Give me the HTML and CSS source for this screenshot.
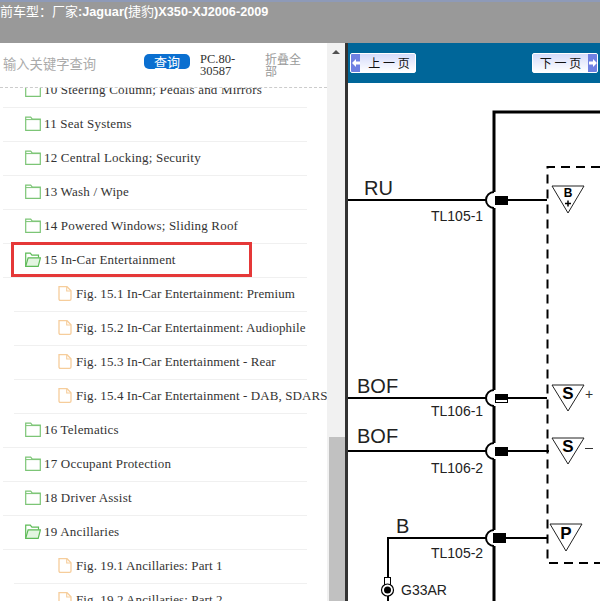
FILE: index.html
```html
<!DOCTYPE html>
<html lang="en">

<head>
    <meta charset="UTF-8">
    <meta name="viewport" content="width=device-width, initial-scale=1.0">
    <title>Document</title>
    <link rel="stylesheet" href="styles.css">
</head>

<body>
    <svg class="defs" width="0" height="0">
        <symbol id="folder" viewBox="0 0 16 15">
            <path d="M.7 14.300V1.200h5l1.600 2h8v11.100z" fill="none" stroke="#7cc576" stroke-width="1.200" />
            <path d="M.7 3.600h14.600" fill="none" stroke="#7cc576" stroke-width="1" />
        </symbol>
        <symbol id="folder-open" viewBox="0 0 16 15">
            <path d="M.7 14.300V1.200h4.600l1.600 2h6.600v2.600" fill="#fff" stroke="#5dbb57" stroke-width="1.200" />
            <path d="M.7 14.300l2.400-8.500h12.300l-2.200 8.500z" fill="#e3f5e1" stroke="#5dbb57" stroke-width="1.200" />
        </symbol>
        <symbol id="file" viewBox="0 0 14 15">
            <path d="M1 .7h8l4 4v8.200q0 1.400-1.400 1.400H2.400Q1 14.300 1 12.900z" fill="none" stroke="#f6cd9b" stroke-width="1.300" />
            <path d="M8.700.7v4.300h4.300" fill="none" stroke="#f6cd9b" stroke-width="1.100" />
        </symbol>
    </svg>

    <div class="top"><span class="cjk">当前车型：厂家</span>:Jaguar(<span class="cjk">捷豹</span>)X350-XJ2006-2009</div>

    <div class="page">
        <div class="side">
            <div class="side-left">
                <div class="search">
                    <span class="placeholder">输入关键字查询</span>
                    <span class="btn">查询</span>
                    <span class="code">PC.80-30587</span>
                    <span class="fold">折叠全部</span>
                </div>
                <div class="tree">
                    <div class="row"><svg class="ico"><use href="#folder" /></svg>10 Steering Column; Pedals and Mirrors</div>
                    <div class="row"><svg class="ico"><use href="#folder" /></svg>11 Seat Systems</div>
                    <div class="row"><svg class="ico"><use href="#folder" /></svg>12 Central Locking; Security</div>
                    <div class="row"><svg class="ico"><use href="#folder" /></svg>13 Wash / Wipe</div>
                    <div class="row"><svg class="ico"><use href="#folder" /></svg>14 Powered Windows; Sliding Roof</div>
                    <div class="row"><svg class="ico"><use href="#folder-open" /></svg>15 In-Car Entertainment<div class="mark"></div></div>
                    <div class="row sub"><svg class="ico-file"><use href="#file" /></svg>Fig. 15.1 In-Car Entertainment: Premium</div>
                    <div class="row sub"><svg class="ico-file"><use href="#file" /></svg>Fig. 15.2 In-Car Entertainment: Audiophile</div>
                    <div class="row sub"><svg class="ico-file"><use href="#file" /></svg>Fig. 15.3 In-Car Entertainment - Rear</div>
                    <div class="row sub"><svg class="ico-file"><use href="#file" /></svg>Fig. 15.4 In-Car Entertainment - DAB, SDARS</div>
                    <div class="row"><svg class="ico"><use href="#folder" /></svg>16 Telematics</div>
                    <div class="row"><svg class="ico"><use href="#folder" /></svg>17 Occupant Protection</div>
                    <div class="row"><svg class="ico"><use href="#folder" /></svg>18 Driver Assist</div>
                    <div class="row"><svg class="ico"><use href="#folder-open" /></svg>19 Ancillaries</div>
                    <div class="row sub"><svg class="ico-file"><use href="#file" /></svg>Fig. 19.1 Ancillaries: Part 1</div>
                    <div class="row sub"><svg class="ico-file"><use href="#file" /></svg>Fig. 19.2 Ancillaries: Part 2</div>
                </div>
            </div>
            <div class="scrollbar">
                <div class="arrow"></div>
                <div class="thumb"></div>
            </div>
        </div>

        <div class="main">
            <div class="nav">
                <div class="pager prev">
                    <span class="pager-arrow">
                        <svg width="8" height="10" viewBox="0 0 8 10"><path d="M0 5l4-4v2.500h4v3H4V9z" fill="#fff" /></svg>
                    </span>
                    <span class="pager-text">上 一 页</span>
                </div>
                <div class="pager">
                    <span class="pager-text">下 一 页</span>
                    <span class="pager-arrow">
                        <svg width="8" height="10" viewBox="0 0 8 10"><path d="M8 5L4 1v2.500H0v3h4V9z" fill="#fff" /></svg>
                    </span>
                </div>
            </div>

            <!-- viewBox uses page coordinates so the wiring can be read off the reference -->
            <svg class="diagram" viewBox="348 83 252 518">
                <path class="bus" d="M600 112H494V601" />
                <path class="dash" d="M600 167H547.500V563H600" />

                <g class="wire">
                    <path d="M348 200H487" />
                    <path d="M508 200H547" />
                    <path d="M348 398H487" />
                    <path d="M508 398H547" />
                    <path d="M348 451H487" />
                    <path d="M508 451H549" />
                    <path d="M486 538H388V601" />
                    <path d="M506 538H547" />
                </g>

                <rect class="gap" x="492" y="192" width="4" height="16" />
                <rect class="gap" x="492" y="390" width="4" height="16" />
                <rect class="gap" x="492" y="443" width="4" height="16" />
                <rect class="gap" x="490" y="530" width="6" height="16" />

                <g class="wire">
                    <path d="M494 192a8 8 0 0 0 0 16" />
                    <path d="M494 390a8 8 0 0 0 0 16" />
                    <path d="M494 443a8 8 0 0 0 0 16" />
                    <path d="M494 530a8 8 0 0 0 0 16" />
                </g>

                <rect x="495" y="196" width="13" height="9" />
                <rect x="495" y="394" width="13" height="6" />
                <rect class="thin" x="495.500" y="399.500" width="12" height="3" />
                <rect x="495" y="447" width="13" height="9" />
                <rect x="493" y="533" width="13" height="10" />

                <polygon class="tri" points="552,186 584,186 568,213" />
                <polygon class="tri" points="552,385 584,385 568,411" />
                <polygon class="tri" points="552,438 584,438 568,464" />
                <polygon class="tri" points="550,524 582,524 566,551" />

                <text class="label-lg" x="364" y="195">RU</text>
                <text class="label-lg" x="357" y="393">BOF</text>
                <text class="label-lg" x="357" y="443">BOF</text>
                <text class="label-lg" x="396" y="533">B</text>

                <text class="label" x="431" y="221">TL105-1</text>
                <text class="label" x="431" y="416">TL106-1</text>
                <text class="label" x="431" y="473">TL106-2</text>
                <text class="label" x="431" y="558">TL105-2</text>
                <text class="label" x="401" y="595">G33AR</text>

                <text class="tri-sm" x="568" y="197">B</text>
                <path class="sign" d="M565 203.500H571M568 200.500V206.500" />
                <text class="tri-lg" x="568" y="399">S</text>
                <text class="tri-lg" x="568" y="452">S</text>
                <text class="tri-lg" x="566" y="539">P</text>
                <text class="side-sign" x="585" y="399">+</text>
                <path class="minus" d="M585 448.500H593" />

                <rect class="pin" x="384.500" y="577.500" width="6" height="7" />
                <circle class="ring" cx="387.500" cy="590" r="6" />
                <circle cx="387.500" cy="590" r="3.500" />
            </svg>
        </div>
    </div>
</body>

</html>
```

FILE: styles.css
```css
html,
body {
    margin: 0;
    height: 100%;
    overflow: hidden;
}

body {
    background: #fff;
    font-family: "Liberation Serif", "Noto Sans CJK SC", serif;
    color: #333;
}

.defs {
    position: absolute;
}

.top {
    box-sizing: border-box;
    height: 43px;
    margin-left: -13px;
    background: #999;
    border-top: 2px solid #8e9ab8;
    color: #fff;
    font: bold 12.700px/20px "Liberation Sans", "Noto Sans CJK SC", sans-serif;
    white-space: pre;
}

.cjk {
    font-size: 13px;
    font-weight: normal;
}

.page {
    display: flex;
    height: 558px;
}

.side {
    display: flex;
    width: 345px;
    flex-shrink: 0;
}

.side-left {
    width: 327px;
    overflow: hidden;
}

.search {
    box-sizing: border-box;
    display: flex;
    align-items: center;
    height: 45px;
    padding-left: 3px;
    border-bottom: 1px dashed #ccc;
    background: #fff;
    position: relative;
    z-index: 1;
}

.placeholder {
    width: 141px;
    margin-bottom: 3px;
    flex-shrink: 0;
    color: #aaa;
    font: 13.300px "Noto Sans CJK SC", sans-serif;
}

.btn {
    width: 46px;
    height: 15px;
    margin-bottom: 8px;
    flex-shrink: 0;
    border-radius: 5px;
    background: #0a6fd0;
    color: #fff;
    text-align: center;
    font: 13px/15px "Noto Sans CJK SC", sans-serif;
}

.code {
    width: 36px;
    margin-left: 10px;
    flex-shrink: 0;
    font-size: 12.500px;
    line-height: 12px;
    color: #333;
    word-break: break-word;
}

.fold {
    width: 37px;
    margin-left: 29px;
    flex-shrink: 0;
    color: #999;
    font: 12px/12px "Noto Sans CJK SC", sans-serif;
}

.tree {
    margin-top: -14px;
}

.row {
    box-sizing: border-box;
    position: relative;
    display: flex;
    align-items: center;
    width: 304px;
    height: 34px;
    margin-left: 3px;
    padding-left: 22px;
    padding-bottom: 2px;
    border-bottom: 1px solid #f0f0f0;
    font-size: 13px;
    letter-spacing: .2px;
    white-space: nowrap;
}

.sub {
    width: 293px;
    margin-left: 14px;
    padding-left: 44px;
    letter-spacing: .1px;
}

.ico {
    width: 16px;
    height: 15px;
    margin-right: 3px;
    flex-shrink: 0;
}

.ico-file {
    width: 14px;
    height: 15px;
    margin-right: 4px;
    flex-shrink: 0;
}

.mark {
    position: absolute;
    left: 8px;
    top: -2px;
    width: 241px;
    height: 35px;
    box-sizing: border-box;
    border: 3px solid #e53838;
}

.scrollbar {
    position: relative;
    width: 18px;
    background: #f1f1f1;
}

.arrow {
    position: absolute;
    left: 5px;
    top: 7px;
    border: 4px solid transparent;
    border-top: 0;
    border-bottom-color: #505050;
}

.thumb {
    position: absolute;
    left: 2px;
    right: 0;
    top: 394px;
    bottom: 0;
    background: #c1c1c1;
}

.main {
    flex: 1;
    min-width: 0;
    display: flex;
    flex-direction: column;
    border-left: 3px solid #333;
}

.nav {
    display: flex;
    align-items: center;
    justify-content: space-between;
    flex-shrink: 0;
    height: 40px;
    padding: 0 2px;
    background: #006699;
}

.pager {
    display: flex;
    width: 66px;
    height: 20px;
    border-radius: 2px;
    overflow: hidden;
    box-sizing: border-box;
    border: 1px solid #fff;
    background: linear-gradient(#d5dbfa, #fff);
}

.pager-arrow {
    display: flex;
    align-items: center;
    justify-content: center;
    width: 9px;
    background: #6f80e2;
}

.pager-text {
    flex: 1;
    text-align: center;
    color: #111;
    font: 12px/18px "Noto Sans CJK SC", sans-serif;
}

.prev .pager-text {
    padding-left: 3px;
}

.diagram {
    display: block;
    width: 252px;
    height: 518px;
    font-family: "Liberation Sans", sans-serif;
}

.bus {
    fill: none;
    stroke: #000;
    stroke-width: 3;
}

.dash {
    fill: none;
    stroke: #000;
    stroke-width: 2;
    stroke-dasharray: 9 6;
}

.wire path {
    fill: none;
    stroke: #000;
    stroke-width: 2;
}

.gap {
    fill: #fff;
}

.thin {
    fill: #fff;
    stroke: #000;
}

.tri {
    fill: #fff;
    stroke: #222;
    stroke-width: 1;
}

.label-lg {
    font-size: 20px;
    fill: #222;
}

.label {
    font-size: 14px;
    fill: #222;
}

.tri-sm,
.tri-lg {
    text-anchor: middle;
    font-weight: bold;
}

.tri-sm {
    font-size: 12px;
}

.tri-lg {
    font-size: 17px;
}

.sign {
    fill: none;
    stroke: #000;
    stroke-width: 1.500;
}

.side-sign {
    font-size: 14px;
    fill: #333;
}

.minus {
    fill: none;
    stroke: #333;
    stroke-width: 1;
}

.pin {
    fill: #fff;
    stroke: #000;
}

.ring {
    fill: #fff;
    stroke: #000;
    stroke-width: 1.200;
}
```
